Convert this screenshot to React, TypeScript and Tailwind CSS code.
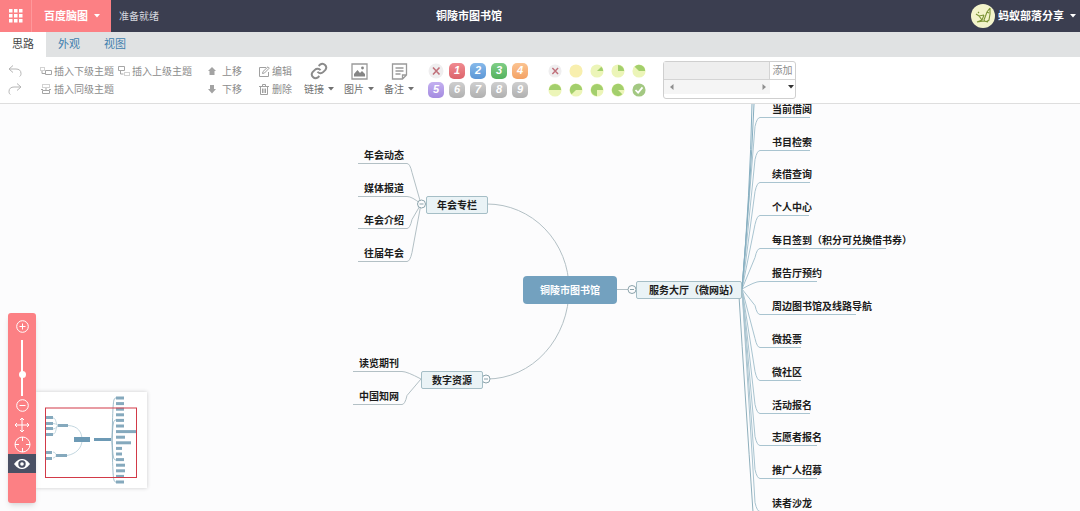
import { useState } from "react";
import type { ReactNode } from "react";

// 右側分支（座標以畫布左上角為原點，y 為文字中線）
const rightLeaves = [
  { text: "当前借阅", y: 6, end: 810 },
  { text: "书目检索", y: 39, end: 810 },
  { text: "续借查询", y: 71, end: 810 },
  { text: "个人中心", y: 104, end: 809 },
  { text: "每日签到（积分可兑换借书券）", y: 137, end: 886 },
  { text: "报告厅预约", y: 170, end: 817 },
  { text: "周边图书馆及线路导航", y: 203, end: 856 },
  { text: "微投票", y: 236, end: 801 },
  { text: "微社区", y: 269, end: 801 },
  { text: "活动报名", y: 302, end: 810 },
  { text: "志愿者报名", y: 334, end: 817 },
  { text: "推广人招募", y: 367, end: 817 },
  { text: "读者沙龙", y: 400, end: 810 },
];

// 左側分支
const newsLeaves = [
  { text: "年会动态", y: 52 },
  { text: "媒体报道", y: 85 },
  { text: "年会介绍", y: 117 },
  { text: "往届年会", y: 150 },
];
const digitalLeaves = [
  { text: "读览期刊", y: 260 },
  { text: "中国知网", y: 293 },
];

const tabs = ["思路", "外观", "视图"];

const priorities = [
  { label: "1", color: "from-[#f08a90] to-[#dc636b]" },
  { label: "2", color: "from-[#86b9ea] to-[#5c97d6]" },
  { label: "3", color: "from-[#7fce86] to-[#55b25e]" },
  { label: "4", color: "from-[#fbc391] to-[#f3a264]" },
  { label: "5", color: "from-[#c4b0f0] to-[#a48be0]" },
  { label: "6", color: "from-[#cfcfcf] to-[#b0b0b0]" },
  { label: "7", color: "from-[#cfcfcf] to-[#b0b0b0]" },
  { label: "8", color: "from-[#cfcfcf] to-[#b0b0b0]" },
  { label: "9", color: "from-[#cfcfcf] to-[#b0b0b0]" },
];

// 縮圖右側各條的寬度
const miniBars = [8, 8, 8, 8, 8, 8, 20, 9, 15, 6, 6, 8, 9, 9, 8, 8];

const Caret = ({ className = "" }: { className?: string }) => (
  <svg viewBox="0 0 6 4" className={`h-1 w-1.5 shrink-0 ${className}`} aria-hidden="true">
    <path d="M0 0h6L3 3.6z" fill="currentColor" />
  </svg>
);

const ToolButton = ({ icon, text }: { icon: ReactNode; text: string }) => (
  <button type="button" className="flex h-[18px] items-center gap-0.5 whitespace-nowrap">
    {icon}
    <span>{text}</span>
  </button>
);

const BigButton = ({ icon, text }: { icon: ReactNode; text: string }) => (
  <button type="button" className="flex w-[30px] flex-col">
    <span className="flex h-[18px] w-full items-center justify-center">{icon}</span>
    <span className="flex h-[18px] items-center gap-1 whitespace-nowrap text-[#707070]">
      {text}
      <Caret />
    </span>
  </button>
);

const CrossIcon = () => (
  <svg viewBox="0 0 16 16" className="size-full" aria-hidden="true">
    <circle cx="8" cy="8" r="7.5" fill="#efeeef" />
    <path d="M5 4.5l6.5 7M11.5 4.5L5 11.5" stroke="#c0707a" strokeWidth="1.6" fill="none" />
  </svg>
);

// 進度圓餅，扇形結束於三點鐘方向
const Pie = ({ part }: { part: number }) => {
  const a = (-part * 45 * Math.PI) / 180;
  const x = 8 + 7 * Math.cos(a);
  const y = 8 + 7 * Math.sin(a);
  return (
    <svg viewBox="0 0 16 16" className="size-full" aria-hidden="true">
      <circle cx="8" cy="8" r="7.5" fill={part ? "#ecf5b8" : "#f8efae"} />
      {part > 0 && (
        <path d={`M8 8L${x} ${y}A7 7 0 ${part > 4 ? 1 : 0} 1 15 8z`} fill="#a3cf6c" />
      )}
    </svg>
  );
};

const Header = () => (
  <header className="flex h-8 shrink-0 items-stretch bg-[#3b3e50] font-bold text-white">
    <button
      type="button"
      aria-label="应用"
      className="flex w-8 items-center justify-center border-r border-[#ff989b] bg-[#fc8084]"
    >
      <svg viewBox="0 0 14 14" className="size-3.5" fill="#fff" aria-hidden="true">
        {[0, 5, 10].map((y) => [0, 5, 10].map((x) => (
          <rect key={`${x}-${y}`} x={x} y={y} width="3.5" height="3.5" />
        )))}
      </svg>
    </button>
    <button
      type="button"
      className="flex w-[79px] items-center gap-1.5 bg-[#fc8084] pl-3 text-[11px]"
    >
      百度脑图
      <Caret />
    </button>
    <span className="flex items-center pl-2 text-[10px] font-normal text-[#d6d8df]">
      准备就绪
    </span>
    <h1 className="flex flex-1 items-center justify-center pr-48 text-[11px]">
      铜陵市图书馆
    </h1>
    <button type="button" className="flex items-center gap-[3px] pr-1 text-[11px]">
      <svg viewBox="0 0 24 24" className="size-6" aria-hidden="true">
        <circle cx="12" cy="12" r="12" fill="#f3f4cb" />
        <path
          d="M19 4l-3 4-3 8c1 2 3 2 5 0l1-6V4M16 8l2 1M5 10l3 2 5-1M8 12l3 4-5 2M6 18l7-1 4 1M7 8l1 1M11 16l2-5"
          fill="none"
          stroke="#7c9436"
          strokeWidth="1.1"
        />
      </svg>
      蚂蚁部落分享
      <Caret className="ml-[3px]" />
    </button>
  </header>
);

const Toolbar = () => {
  const [tag, setTag] = useState("");
  return (
    <div className="flex shrink-0 items-center border-b border-[#dedede] bg-white py-1 pl-2 text-[10px] text-[#8c8c8c]">
      {/* 撤銷 重做 */}
      <div className="flex w-3.5 flex-col">
        <button type="button" aria-label="撤销" className="flex h-[18px] items-center">
          <svg viewBox="0 0 14 12" className="h-3 w-3.5" fill="none" stroke="#b5b5b5" aria-hidden="true">
            <path d="M5 .5L1 4l4 3.500M1 4h7c3 0 5 1.500 5 4.500c0 1.500-.5 2.500-1.500 3.200" />
          </svg>
        </button>
        <button type="button" aria-label="重做" className="flex h-[18px] items-center">
          <svg viewBox="0 0 14 12" className="h-3 w-3.5" fill="none" stroke="#b5b5b5" aria-hidden="true">
            <path d="M9 .5L13 4L9 7.500M13 4H6C3 4 1 5.500 1 8.500c0 1.500.5 2.500 1.500 3.200" />
          </svg>
        </button>
      </div>
      {/* 插入主題 */}
      <div className="ml-[18px] grid grid-cols-[auto_auto] gap-x-1">
        <ToolButton
          text="插入下级主题"
          icon={
            <svg viewBox="0 0 12 10" className="h-2.5 w-3" fill="none" stroke="#a5a5a5" aria-hidden="true">
              <path d="M.5 1.500h4v3h-4z" strokeDasharray="1 1" />
              <path d="M2 5v2.500h3M5.500 4.500h6v4h-6z" />
            </svg>
          }
        />
        <ToolButton
          text="插入上级主题"
          icon={
            <svg viewBox="0 0 12 10" className="h-2.5 w-3" fill="none" stroke="#a5a5a5" aria-hidden="true">
              <path d="M.5.5h6v4h-6zM2.500 5v3h3" />
              <path d="M6.500 6.500h5v3h-5z" strokeDasharray="1 1" />
            </svg>
          }
        />
        <ToolButton
          text="插入同级主题"
          icon={
            <svg viewBox="0 0 12 10" className="h-2.5 w-3" fill="none" stroke="#a5a5a5" aria-hidden="true">
              <path d="M2.500.5h7v3h-7z" strokeDasharray="1 1" />
              <path d="M6 4v2M1 5.500h2M9 5.500h2M2.500 6.500h7v3h-7z" />
            </svg>
          }
        />
      </div>
      {/* 上移 下移 */}
      <div className="ml-4 flex w-[51px] flex-col">
        <ToolButton
          text="上移"
          icon={
            <svg viewBox="0 0 12 9" className="h-[9px] w-3" fill="#a3a3a3" aria-hidden="true">
              <path d="M4 0l4 4H6.500v4h-5V4H0z" />
            </svg>
          }
        />
        <ToolButton
          text="下移"
          icon={
            <svg viewBox="0 0 12 9" className="h-[9px] w-3" fill="#a3a3a3" aria-hidden="true">
              <path d="M2 0h4v4h2L4 8.500L0 4h2z" />
            </svg>
          }
        />
      </div>
      {/* 編輯 刪除 */}
      <div className="flex flex-col">
        <ToolButton
          text="编辑"
          icon={
            <svg viewBox="0 0 11 11" className="size-[11px]" fill="none" stroke="#a0a0a0" aria-hidden="true">
              <path d="M7 1.500H.5v9h9V6M3.500 7.500l.5-2L9 .8l1.300 1.300L5.500 7z" />
            </svg>
          }
        />
        <ToolButton
          text="删除"
          icon={
            <svg viewBox="0 0 11 11" className="size-[11px]" fill="none" stroke="#a0a0a0" aria-hidden="true">
              <path d="M0 2.500h10M3.500 2.500V.5h3v2M1.500 3v7.500h7V3M3.500 4.500v4.500M5 4.500v4.500M6.500 4.500v4.500" />
            </svg>
          }
        />
      </div>
      {/* 鏈接 圖片 備註 */}
      <div className="ml-3 flex gap-2.5">
        <BigButton
          text="链接"
          icon={
            <svg viewBox="0 0 24 24" className="size-[18px]" fill="none" stroke="#8b8b8b" strokeWidth="2.600" aria-hidden="true">
              <path d="M10 13a5 5 0 0 0 7.500.5l3-3a5 5 0 0 0-7-7l-2 1.700" />
              <path d="M14 11a5 5 0 0 0-7.500-.5l-3 3a5 5 0 0 0 7 7l2-1.700" />
            </svg>
          }
        />
        <BigButton
          text="图片"
          icon={
            <svg viewBox="0 0 17 17" className="size-[17px]" aria-hidden="true">
              <path d="M1 1h15v15H1z" fill="none" stroke="#9a9a9a" strokeWidth="1.300" />
              <path d="M3 13.500V11l3.500-4L9 10l2-2 3 3v2.500z" fill="#858585" />
              <circle cx="11.500" cy="5" r="1.400" fill="#858585" />
            </svg>
          }
        />
        <BigButton
          text="备注"
          icon={
            <svg viewBox="0 0 17 17" className="size-[17px]" fill="none" stroke="#9a9a9a" strokeWidth="1.300" aria-hidden="true">
              <path d="M1.500 1h14v11l-4 4h-10zM11.500 16v-4h4M4.500 5h8M4.500 8h8M4.500 11h5" />
            </svg>
          }
        />
      </div>
      {/* 優先級 */}
      <div className="ml-3.5 grid grid-cols-5 gap-x-[5px] gap-y-[3px]">
        <button type="button" aria-label="移除优先级" className="size-4">
          <CrossIcon />
        </button>
        {priorities.map((v) => {
          return (
            <button
              key={v.label}
              type="button"
              className={`flex size-4 items-center justify-center rounded-[5px] bg-linear-to-b text-[11px] leading-none font-bold text-white italic ${v.color}`}
            >
              {v.label}
            </button>
          );
        })}
      </div>
      {/* 進度 */}
      <div className="ml-5 grid grid-cols-5 gap-x-[7px] gap-y-[5px]">
        <button type="button" aria-label="移除进度" className="size-3.5">
          <CrossIcon />
        </button>
        {[0, 1, 2, 3, 4, 5, 6, 7].map((v) => {
          return (
            <button key={v} type="button" aria-label={`进度 ${v}/8`} className="size-3.5">
              <Pie part={v} />
            </button>
          );
        })}
        <button type="button" aria-label="已完成" className="size-3.5">
          <svg viewBox="0 0 16 16" className="size-full" aria-hidden="true">
            <circle cx="8" cy="8" r="7.500" fill="#a3c882" />
            <path d="M4 8l3 3 5-6" fill="none" stroke="#fff" strokeWidth="2" />
          </svg>
        </button>
      </div>
      {/* 標籤 */}
      <div className="ml-[17px] w-[133px] rounded-[3px] border border-[#cfcfcf]">
        <div className="flex h-[18px] border-b border-[#d4d4d4]">
          <input
            type="text"
            aria-label="标签"
            value={tag}
            onChange={(e) => setTag(e.target.value)}
            className="w-[106px] border-r border-[#d4d4d4] bg-[#eeeeee] px-1 outline-none"
          />
          <button type="button" className="flex-1 whitespace-nowrap">
            添加
          </button>
        </div>
        <div className="flex h-[18px] items-start">
          <div className="flex h-3.5 w-[106px] items-center justify-between bg-[#f5f5f5] pr-1 pl-1.5">
            <button type="button" aria-label="向左" className="flex">
              <svg viewBox="0 0 4 6" className="h-1.5 w-1" fill="#8f8f8f" aria-hidden="true">
                <path d="M3.500 0v6L0 3z" />
              </svg>
            </button>
            <button type="button" aria-label="向右" className="flex">
              <svg viewBox="0 0 4 6" className="h-1.5 w-1" fill="#8f8f8f" aria-hidden="true">
                <path d="M.5 0v6L4 3z" />
              </svg>
            </button>
          </div>
          <button
            type="button"
            aria-label="更多标签"
            className="flex h-3.5 flex-1 items-center justify-end pr-px text-[#333]"
          >
            <Caret />
          </button>
        </div>
      </div>
    </div>
  );
};

// 葉節點到主節點的連線 + 底線
const leafPath = (hx: number, hy: number, x: number, y: number, end: number) => {
  const dx = x > hx ? 1 : -1;
  const far = Math.abs(y - hy) > 20;
  const dy = y > hy ? -1 : 1;
  return far
    ? `M${hx} ${hy}L${x - dx * 5} ${y + dy * 9}Q${x - dx * 3} ${y} ${x} ${y}H${end}`
    : `M${hx} ${hy}Q${x - dx * 5} ${y} ${x} ${y}H${end}`;
};

const Toggle = ({ x, y }: { x: number; y: number }) => (
  <g fill="#fcfcfd" stroke="#8ba3ab" strokeWidth="1">
    <circle cx={x} cy={y} r="4" />
    <path d={`M${x - 2} ${y}h4`} />
  </g>
);

const Leaf = ({ text, x, y }: { text: string; x: number; y: number }) => (
  <span className="absolute -translate-y-1/2 leading-4 whitespace-nowrap" style={{ left: x, top: y }}>
    {text}
  </span>
);

const MindMap = () => (
  <div className="text-[10px] font-bold text-[#1c1c1c]">
    <svg className="absolute inset-0 size-full" fill="none" stroke="#b3c0c5" aria-hidden="true">
      <path d="M487 100A82 85 0 0 1 569 185A82 90 0 0 1 487 275M616 185.500h20" />
      {newsLeaves.map((v) => (
        <path key={v.text} d={leafPath(421, 100, 407, v.y + 7.5, 358)} />
      ))}
      {digitalLeaves.map((v) => (
        <path key={v.text} d={leafPath(421, 275, 402, v.y + 7.5, 353)} />
      ))}
      <g stroke="#a9c4d0">
        {rightLeaves.map((v) => (
          <path key={v.text} d={leafPath(742, 185, 760, v.y + 7.5, v.end)} />
        ))}
        <path d="M742 185Q750 90 752 0M742 185Q750 90 754 0" stroke="#86aec0" />
        <path d="M739 192Q745 290 753 408" stroke="#8fafbc" />
      </g>
      <Toggle x={421.5} y={100} />
      <Toggle x={632} y={185.5} />
      <Toggle x={486} y={275} />
    </svg>
    {newsLeaves.map((v) => (
      <Leaf key={v.text} text={v.text} x={364} y={v.y} />
    ))}
    {digitalLeaves.map((v) => (
      <Leaf key={v.text} text={v.text} x={359} y={v.y} />
    ))}
    {rightLeaves.map((v) => (
      <Leaf key={v.text} text={v.text} x={772} y={v.y} />
    ))}
    <div className="absolute top-[92px] left-[426px] rounded-[2px] border border-[#a5bec6] bg-[#eaf3f6] px-2.5 pt-px leading-[15px] whitespace-nowrap">
      年会专栏
    </div>
    <div className="absolute top-[267px] left-[421px] rounded-[2px] border border-[#a5bec6] bg-[#eaf3f6] px-2.5 pt-px leading-[15px] whitespace-nowrap">
      数字资源
    </div>
    <div className="absolute top-[177px] left-[636px] rounded-[2px] border border-[#a5bec6] bg-[#eaf3f6] pr-0.5 pl-3 pt-px leading-[15px] whitespace-nowrap">
      服务大厅（微网站）
    </div>
    <div className="absolute top-[172px] left-[523px] rounded-[4px] bg-[#73a1bf] px-[17px] pt-px leading-[27px] whitespace-nowrap text-white">
      铜陵市图书馆
    </div>
  </div>
);

const Navigator = () => (
  <div className="absolute bottom-2 left-2 flex items-end">
    {/* 縮放工具條 */}
    <div className="z-10 flex h-[190px] w-7 flex-col items-center rounded-[3px] bg-[#fc8084] pt-[7px] shadow-md">
      <button type="button" aria-label="放大" className="shrink-0">
        <svg viewBox="0 0 13 13" className="size-[13px]" fill="none" stroke="#fff" aria-hidden="true">
          <circle cx="6.500" cy="6.500" r="5.800" />
          <path d="M3.500 6.500h6M6.500 3.500v6" />
        </svg>
      </button>
      <input
        type="range"
        aria-label="缩放"
        min={0}
        max={100}
        defaultValue={37}
        className="mt-[7px] h-14 w-2 appearance-none bg-[linear-gradient(to_right,transparent_3px,white_3px,white_5px,transparent_5px)] [direction:rtl] [writing-mode:vertical-lr] [&::-webkit-slider-thumb]:size-[7px] [&::-webkit-slider-thumb]:appearance-none [&::-webkit-slider-thumb]:rounded-full [&::-webkit-slider-thumb]:bg-white"
      />
      <button type="button" aria-label="缩小" className="mt-[3px] shrink-0">
        <svg viewBox="0 0 13 13" className="size-[13px]" fill="none" stroke="#fff" aria-hidden="true">
          <circle cx="6.500" cy="6.500" r="5.800" />
          <path d="M3.500 6.500h6" />
        </svg>
      </button>
      <button type="button" aria-label="移动" className="mt-[5px] shrink-0">
        <svg viewBox="0 0 16 16" className="size-4" fill="none" stroke="#fff" aria-hidden="true">
          <path d="M8 1v14M1 8h14M6 3l2-2 2 2M6 13l2 2 2-2M3 6L1 8l2 2M13 6l2 2-2 2" />
        </svg>
      </button>
      <button type="button" aria-label="定位中心" className="mt-[3px] shrink-0">
        <svg viewBox="0 0 17 17" className="size-[17px]" fill="none" stroke="#fff" aria-hidden="true">
          <circle cx="8.500" cy="8.500" r="7.500" />
          <path d="M8.500 1v4M8.500 12v4M1 8.500h4M12 8.500h4" />
        </svg>
      </button>
      <button
        type="button"
        aria-label="导航器"
        className="mt-px flex h-[19px] w-full shrink-0 items-center justify-center bg-[#4a5064]"
      >
        <svg viewBox="0 0 16 12" className="h-3 w-4" aria-hidden="true">
          <path d="M0 6C3 2 5.500 1 8 1s5 1 8 5c-3 4-5.500 5-8 5S3 10 0 6z" fill="#fff" />
          <circle cx="8" cy="6" r="3.700" fill="#4a5064" />
          <circle cx="8" cy="6" r="1.800" fill="#fff" />
        </svg>
      </button>
    </div>
    {/* 縮圖 */}
    <div className="mb-[15px] bg-white shadow-[0_0_4px_rgba(0,0,0,0.2)]">
      <svg viewBox="0 0 111 96" className="h-24 w-[111px]" fill="none" role="img" aria-label="缩略图">
        <g stroke="#b4cdd8" strokeWidth="0.800">
          <path d="M32 33.500C42 34 46 40 46 48S40 62 31 63.500" />
          <path d="M17 26c4 0 2 7.500 6 7.500M17 31.500c4 0 3 2 6 2M17 37c4 0 3-3.500 6-3.500M17 42c4 0 2-8.500 6-8.500M17 60c3 0 2 3 4 3M17 66c3 0 2-3 4-3" />
          <path d="M80 6c-3 0-3 4-4 42c1 38 1 42 4 42M80 28c-3 0-3 4-4 20c1 16 1 20 4 20" stroke="#86abbd" />
        </g>
        <g fill="#85a9bd">
          {[24, 30, 35, 41].map((y) => (
            <rect key={y} x="10" y={y} width="7" height="3" />
          ))}
          {[59, 65].map((y) => (
            <rect key={y} x="10" y={y} width="6" height="3" />
          ))}
          <rect x="22" y="32" width="10" height="3" />
          <rect x="20" y="62" width="11" height="3" />
          <rect x="38" y="45" width="16" height="5" fill="#6d9ab5" />
          <rect x="58" y="46" width="17" height="3" fill="#6d9ab5" />
          {miniBars.map((w, i) => (
            <rect key={i} x="80" y={4.5 + i * 5.6} width={w} height="3" />
          ))}
        </g>
        <rect x="9.500" y="16" width="91" height="69.500" stroke="#d23a48" />
      </svg>
    </div>
  </div>
);

export default function App() {
  const [tab, setTab] = useState("思路");
  return (
    <div className="flex h-screen flex-col overflow-hidden bg-white font-['Liberation_Sans','Noto_Sans_CJK_SC',sans-serif]">
      <Header />
      {/* 選項卡 */}
      <div role="tablist" className="flex h-[25px] shrink-0 bg-[#e0e2e3] text-[11px]">
        {tabs.map((v) => {
          return (
            <button
              key={v}
              type="button"
              role="tab"
              aria-selected={tab === v}
              onClick={() => setTab(v)}
              className={tab === v ? "w-[46px] bg-white text-[#444]" : "w-[46px] text-[#3f7fae]"}
            >
              {v}
            </button>
          );
        })}
      </div>
      <Toolbar />
      {/* 畫布 */}
      <main className="relative flex-1 overflow-hidden bg-[#fcfcfd]">
        <MindMap />
        <Navigator />
      </main>
    </div>
  );
}
